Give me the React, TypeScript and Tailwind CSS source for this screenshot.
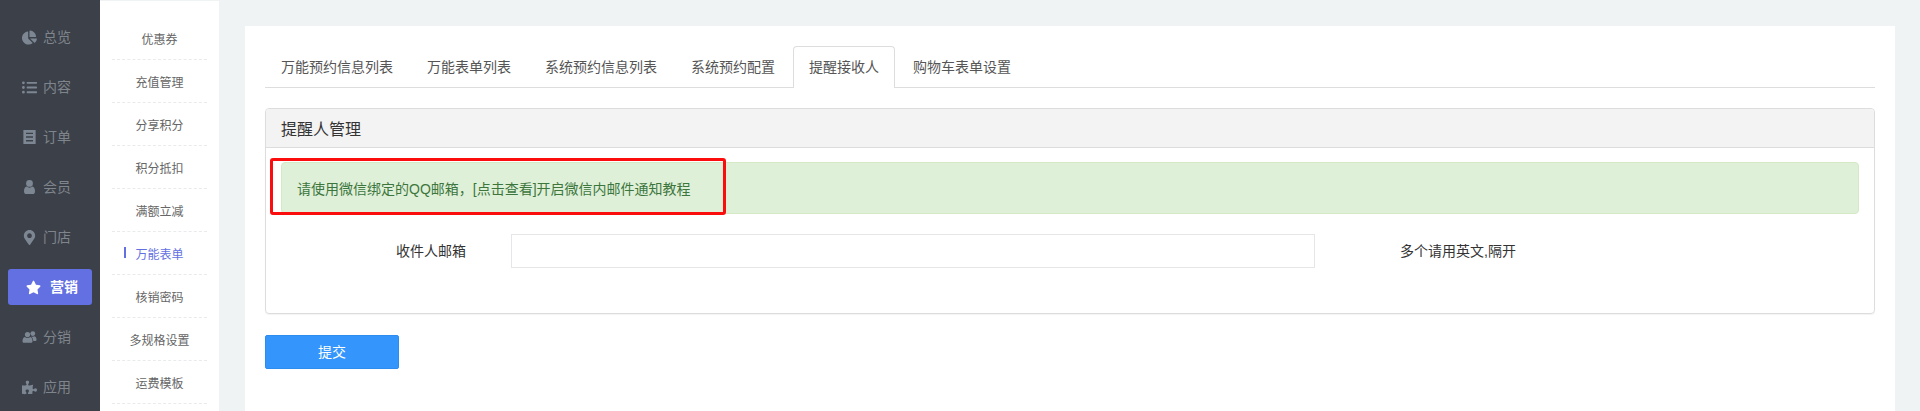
import { FaChartPie, FaListUl, FaMapMarkerAlt, FaPuzzlePiece, FaStar } from "react-icons/fa";
import type { ReactNode } from "react";

const FONT = "font-['Liberation_Sans','Noto_Sans_CJK_SC',sans-serif]";

function OrderIcon() {
  return (
    <svg viewBox="0 0 14 16" className="w-[13px] h-[14px]" fill="currentColor">
      <path fillRule="evenodd" d="M0 0h14v16H0zM3 3v1.6h8V3zM3 7.2v1.6h8V7.2zM3 11.4V13h8v-1.6z" />
    </svg>
  );
}

function UserIcon() {
  return (
    <svg viewBox="0 0 11 14" className="w-[11px] h-[14px]" fill="currentColor">
      <circle cx="5.5" cy="3.4" r="3.4" />
      <path d="M2.6 6.6c.8.7 1.8 1.1 2.9 1.1s2.1-.4 2.9-1.1C10 7 11 8.8 11 11.4c0 1.6-1 2.6-2.4 2.6H2.4C1 14 0 13 0 11.4 0 8.8 1 7 2.6 6.6z" />
    </svg>
  );
}

function UsersIcon() {
  return (
    <svg viewBox="0 0 15 12" className="w-[15px] h-[12px]" fill="currentColor">
      <circle cx="5.5" cy="3.6" r="2.6" />
      <path d="M2.8 6c.7.6 1.7 1 2.7 1s2-.4 2.7-1c1.6.3 2.3 2.4 2.3 4.2 0 1-.7 1.6-1.6 1.6H2.1C1.2 11.800.5 11.200.5 10.200.5 8.400 1.200 6.300 2.800 6z" />
      <circle cx="10.800" cy="2.600" r="2.400" />
      <path d="M9.500 5.500c.4.200.9.300 1.300.300.600 0 1.200-.200 1.700-.500 1.300.300 2 2 2 3.500 0 .800-.500 1.300-1.300 1.300h-1.900c-.100-1.600-.700-3.300-1.800-4.100z" />
    </svg>
  );
}

const navItems: { label: string; icon: ReactNode; active?: boolean }[] = [
  { label: "总览", icon: <FaChartPie size={15} /> },
  { label: "内容", icon: <FaListUl size={15} /> },
  { label: "订单", icon: <OrderIcon /> },
  { label: "会员", icon: <UserIcon /> },
  { label: "门店", icon: <FaMapMarkerAlt size={15} /> },
  { label: "营销", icon: <FaStar size={15} />, active: true },
  { label: "分销", icon: <UsersIcon /> },
  { label: "应用", icon: <FaPuzzlePiece size={15} /> },
];

const subItems = ["优惠券", "充值管理", "分享积分", "积分抵扣", "满额立减", "万能表单", "核销密码", "多规格设置", "运费模板"];

const tabs = ["万能预约信息列表", "万能表单列表", "系统预约信息列表", "系统预约配置", "提醒接收人", "购物车表单设置"];

export default function App() {
  return (
    <div className={`${FONT} flex h-[411px] overflow-hidden bg-[#f0f3f4] text-[14px]`}>
      {/* Main nav */}
      <div className="w-[100px] shrink-0 bg-[#3c4049] pt-[12px] flex flex-col">
        {navItems.map((item) =>
          item.active ? (
            <div key={item.label} className="mx-[8px] my-[7px] h-[36px] shrink-0 rounded-[3px] bg-[#6370e2] text-white font-bold flex items-center pl-[18px] gap-[9px]">
              <span className="w-[15px] flex justify-center">{item.icon}</span>
              {item.label}
            </div>
          ) : (
            <div key={item.label} className="h-[50px] shrink-0 text-[#7d8793] flex items-center pl-[22px] gap-[6px]">
              <span className="w-[15px] flex justify-center">{item.icon}</span>
              <span className="text-[#7f858c]">{item.label}</span>
            </div>
          )
        )}
      </div>

      {/* Sub nav */}
      <div className="w-[119px] shrink-0 mt-[1px] bg-white px-[12px] pt-[16px] text-[12px] text-[#666]">
        {subItems.map((s) => (
          <div key={s} className={`relative h-[43px] shrink-0 pt-[3px] flex items-center justify-center border-b border-dashed border-[#e8eaec] ${s === "万能表单" ? "text-[#6370e2]" : ""}`}>
            {s === "万能表单" && <span className="absolute left-[12px] top-[15px] w-[2px] h-[11px] bg-[#6370e2]" />}
            {s}
          </div>
        ))}
      </div>

      {/* Content */}
      <div className="flex-1 min-w-0 pt-[26px] pl-[26px] pr-[25px]">
        <div className="relative bg-white h-[400px] p-[20px]">
          <div className="flex border-b border-[#ddd] h-[42px] text-[#555]">
            {tabs.map((t) => (
              <div
                key={t}
                className={`h-[42px] mr-[2px] px-[15px] leading-[40px] border-t border-x rounded-t-[4px] ${
                  t === "提醒接收人" ? "bg-white border-[#ddd]" : "border-transparent"
                }`}
              >
                {t}
              </div>
            ))}
          </div>

          <div className="mt-[20px] h-[206px] border border-[#ddd] rounded-[4px] shadow-[0_1px_1px_rgba(0,0,0,0.05)]">
            <div className="h-[39px] bg-[#f3f3f3] border-b border-[#ddd] rounded-t-[3px] px-[15px] text-[16px] leading-[41px] text-[#333]">提醒人管理</div>
            <div className="px-[15px] pt-[14px]">
              <div className="h-[52px] bg-[#dff0d8] border border-[#d6e9c6] rounded-[4px] px-[15px] leading-[52px] text-[#3c763d]">
                请使用微信绑定的QQ邮箱，[点击查看]开启微信内邮件通知教程
              </div>
              <div className="mt-[20px] flex items-center text-[#333]">
                <div className="w-[230px] pr-[45px] text-right">收件人邮箱</div>
                <input className="w-[804px] h-[34px] border border-[#e5e6e7] bg-white outline-none" />
                <div className="ml-[85px]">多个请用英文,隔开</div>
              </div>
            </div>
          </div>

          <button className="mt-[21px] block w-[134px] h-[34px] rounded-[2px] bg-[#3496fd] border border-[#2d8cf0] text-white">提交</button>

          {/* Red annotation */}
          <div className="absolute left-[25px] top-[132px] w-[456px] h-[57px] border-[3px] border-[#fb0d0d] rounded-[3px]" />
        </div>
      </div>
    </div>
  );
}
